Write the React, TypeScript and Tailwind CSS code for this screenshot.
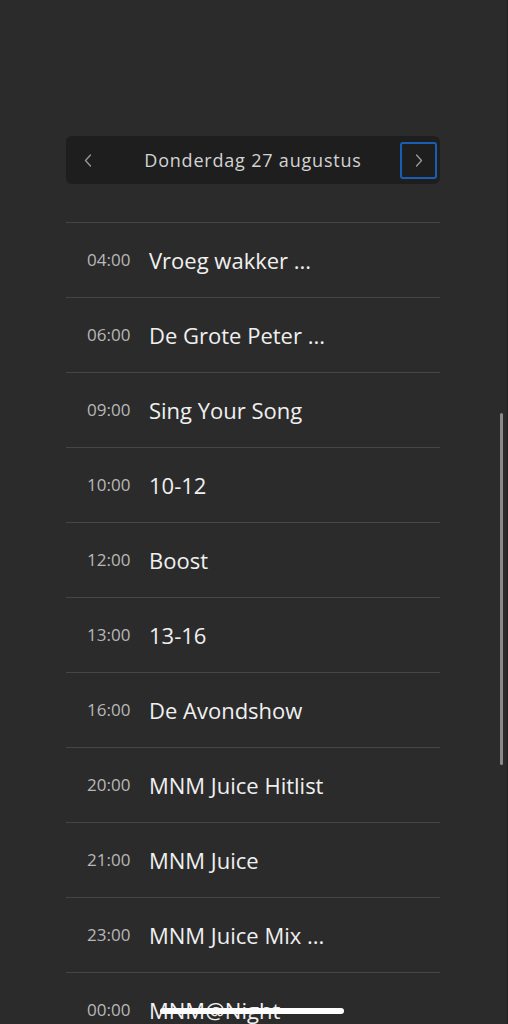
import React from 'react';

const PROGRAMS = [
  { time: '04:00', title: 'Vroeg wakker ...' },
  { time: '06:00', title: 'De Grote Peter ...' },
  { time: '09:00', title: 'Sing Your Song' },
  { time: '10:00', title: '10-12' },
  { time: '12:00', title: 'Boost' },
  { time: '13:00', title: '13-16' },
  { time: '16:00', title: 'De Avondshow' },
  { time: '20:00', title: 'MNM Juice Hitlist' },
  { time: '21:00', title: 'MNM Juice' },
  { time: '23:00', title: 'MNM Juice Mix ...' },
  { time: '00:00', title: 'MNM@Night' },
];

const Chevron = ({ dir }: { dir: 'left' | 'right' }) => (
  <svg width="8" height="13" viewBox="0 0 8 13" fill="none">
    <path
      d={dir === 'left' ? 'M6.5 1 L1.5 6.5 L6.5 12' : 'M1.5 1 L6.5 6.5 L1.5 12'}
      stroke="#9a9a9a"
      strokeWidth="1.3"
      strokeLinecap="round"
      strokeLinejoin="round"
    />
  </svg>
);

export default function App() {
  return (
    <div
      className="relative h-[1024px] w-full overflow-hidden bg-[#2b2b2b]"
      style={{ fontFamily: '"Open Sans", "Noto Sans", sans-serif' }}
    >
      <div className="ml-[66px] mr-[68px] pt-[136px]">
        {/* Day selector */}
        <div className="flex h-12 items-center justify-between rounded-md bg-[#1e1e1e] px-[3px]">
          <button className="flex h-[37px] w-[37px] items-center justify-center">
            <Chevron dir="left" />
          </button>
          <span className="text-[18px] tracking-[0.8px] text-[#d4d4d4]">Donderdag 27 augustus</span>
          <button className="flex h-[37px] w-[37px] items-center justify-center rounded-[3px] border-2 border-[#1a5db5]">
            <Chevron dir="right" />
          </button>
        </div>

        {/* Schedule */}
        <div className="mt-[38px] border-t border-[#464646]">
          {PROGRAMS.map((p) => (
            <div key={p.time} className="flex h-[75px] items-center border-b border-[#464646] pl-[21px]">
              <span className="w-[62px] text-[17px] text-[#b8b8b8]">{p.time}</span>
              <span className="text-[22px] text-[#f0f0f0]">{p.title}</span>
            </div>
          ))}
        </div>
      </div>

      {/* scroll indicator */}
      <div className="absolute right-[5px] top-[413px] h-[352px] w-[3px] rounded-full bg-[#8a8a8a]" />
      <div className="absolute right-0 top-0 h-full w-[1px] bg-[#222]" />

      {/* home indicator */}
      <div className="absolute bottom-[10px] left-[160px] h-[6px] w-[184px] rounded-full bg-white" />
    </div>
  );
}
